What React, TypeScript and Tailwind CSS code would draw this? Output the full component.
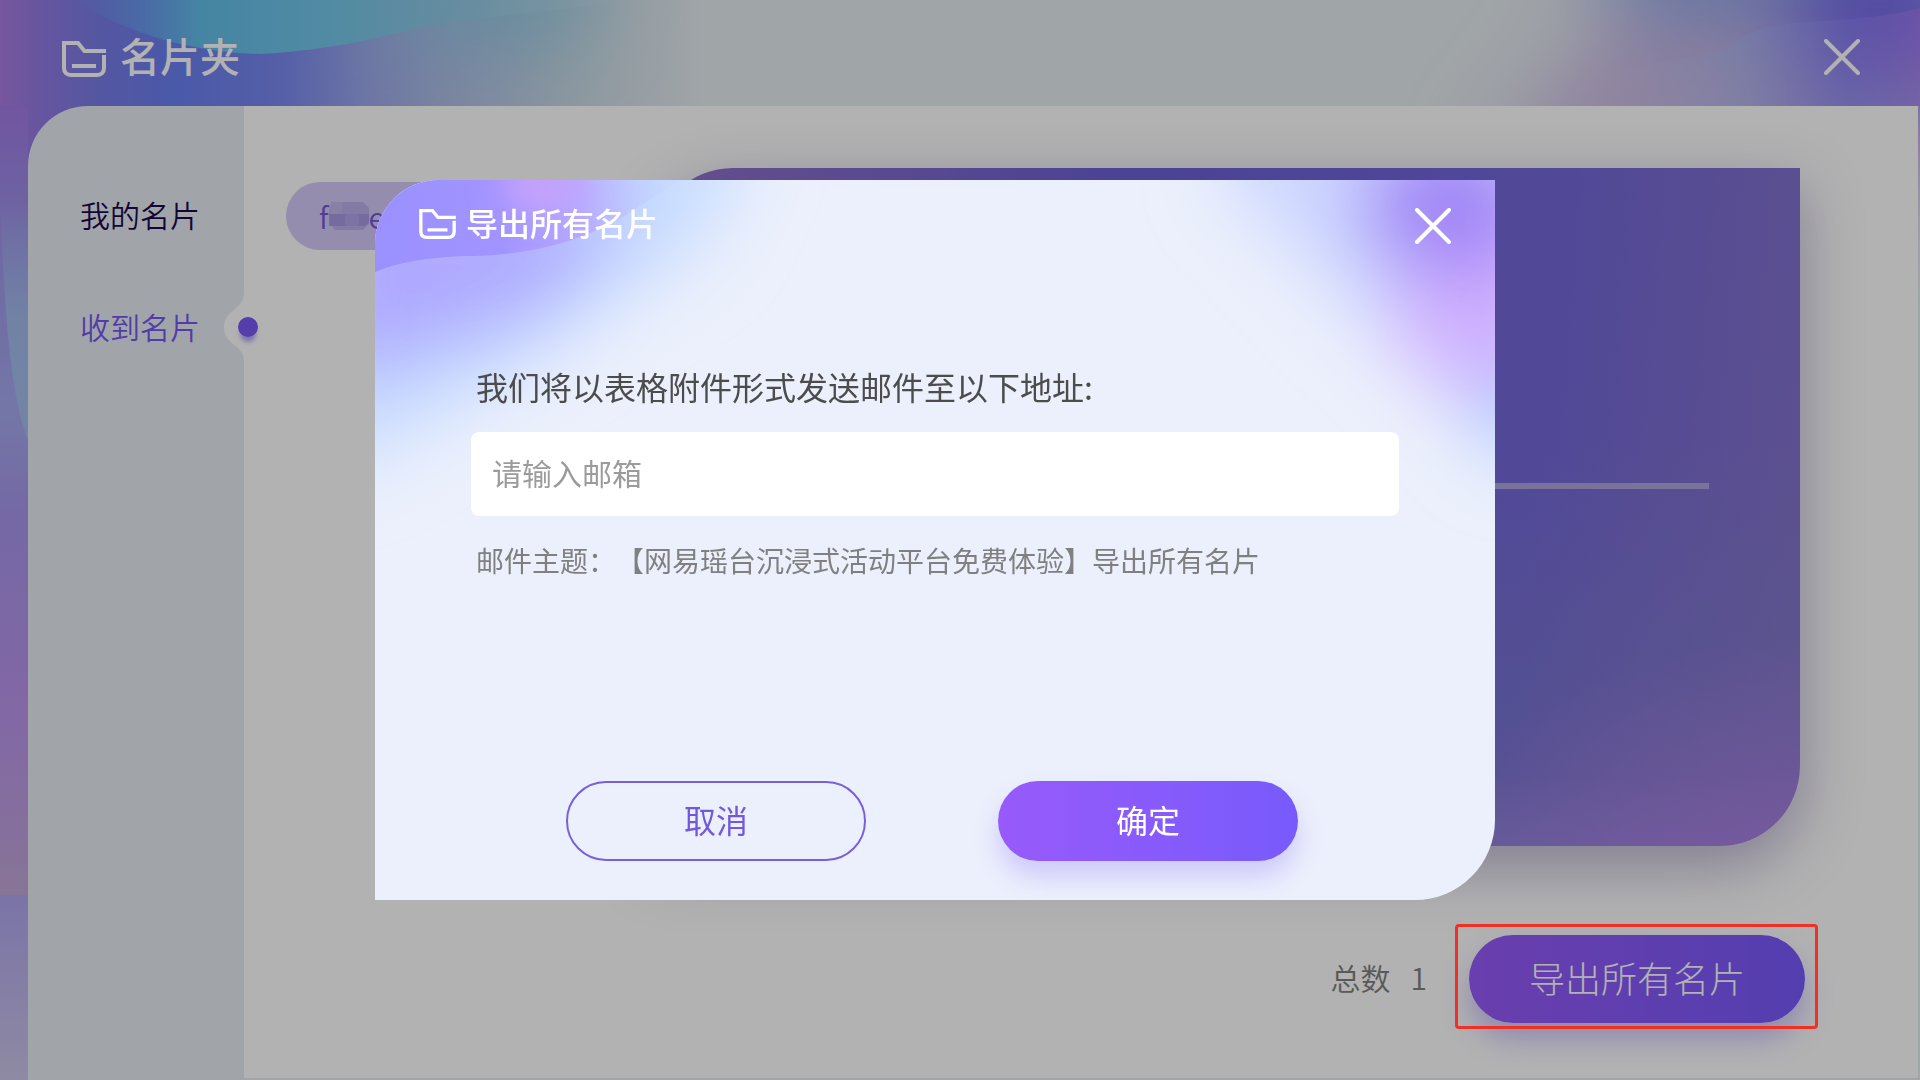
import React, { useState } from 'react';

const menu = [
  { id: 'mine', label: '我的名片' },
  { id: 'received', label: '收到名片' },
];

function FolderIcon({ className }: { className?: string }) {
  return (
    <svg viewBox="0 0 44 36" fill="none" stroke="currentColor" strokeWidth="4" className={className} aria-hidden="true">
      <path d="M44 10H22.5L16 2H2v25c0 4.4 2.6 7 7 7h26c4.4 0 7-2.6 7-7V14" />
      <path d="M10 25h24" />
    </svg>
  );
}

function CloseIcon({ className }: { className?: string }) {
  return (
    <svg viewBox="0 0 36 36" fill="none" stroke="currentColor" strokeWidth="4" strokeLinecap="round" className={className} aria-hidden="true">
      <path d="M2 2l32 32M34 2L2 34" />
    </svg>
  );
}

// Coloured light behind the whole page
function PageBackdrop() {
  return (
    <svg className="absolute inset-0 -z-10 h-full w-full" viewBox="0 0 1920 1080" preserveAspectRatio="none" aria-hidden="true">
      <defs>
        <filter id="pb-soft" x="-60%" y="-100%" width="220%" height="300%"><feGaussianBlur stdDeviation="18" /></filter>
        <filter id="pb-wide" x="-60%" y="-150%" width="220%" height="400%"><feGaussianBlur stdDeviation="44" /></filter>
        <linearGradient id="pb-side" gradientUnits="userSpaceOnUse" x1="0" y1="0" x2="0" y2="1080">
          <stop offset="0.1" stopColor="#a47ae6" />
          <stop offset="0.16" stopColor="#9d88e8" />
          <stop offset="0.24" stopColor="#a098ea" />
          <stop offset="0.38" stopColor="#a6aaf0" />
          <stop offset="0.48" stopColor="#a896ec" />
          <stop offset="0.64" stopColor="#ba94ee" />
          <stop offset="0.76" stopColor="#be9fe2" />
          <stop offset="0.828" stopColor="#c4a9d6" />
          <stop offset="0.829" stopColor="#b0a6f0" />
          <stop offset="1" stopColor="#cdc6ea" />
        </linearGradient>
        <linearGradient id="pb-top" gradientUnits="userSpaceOnUse" x1="0" y1="0" x2="700" y2="0">
          <stop offset="0" stopColor="#aa7ce2" />
          <stop offset="0.06" stopColor="#927ae4" />
          <stop offset="0.14" stopColor="#7a7ce8" />
          <stop offset="0.25" stopColor="#6a80f2" />
          <stop offset="0.4" stopColor="#7a88f0" />
          <stop offset="0.52" stopColor="#9ca8ec" />
          <stop offset="0.64" stopColor="#b2bee6" />
          <stop offset="0.8" stopColor="#c8d8e4" />
          <stop offset="1" stopColor="#e5ecf0" />
        </linearGradient>
        <linearGradient id="pb-teal" gradientUnits="userSpaceOnUse" x1="60" y1="0" x2="640" y2="0">
          <stop offset="0" stopColor="#6a90ee" stopOpacity="0" />
          <stop offset="0.24" stopColor="#62bfea" />
          <stop offset="0.5" stopColor="#78c8ea" />
          <stop offset="0.7" stopColor="#90cce6" stopOpacity="0.7" />
          <stop offset="1" stopColor="#dfeaee" stopOpacity="0" />
        </linearGradient>
        <linearGradient id="pb-fold" x1="0" y1="0" x2="1" y2="0">
          <stop offset="0" stopColor="#dfcfe6" stopOpacity="0" />
          <stop offset="0.5" stopColor="#aab6f0" />
          <stop offset="0.8" stopColor="#8a80f6" />
          <stop offset="1" stopColor="#a67af4" />
        </linearGradient>
        <linearGradient id="pb-wedge" x1="0" y1="0" x2="0" y2="1">
          <stop offset="0" stopColor="#a2cdee" stopOpacity="0" />
          <stop offset="0.5" stopColor="#a2cdee" />
          <stop offset="1" stopColor="#a2cdee" />
        </linearGradient>
      </defs>
      <rect width="1920" height="1080" fill="#e5ecf0" />
      <rect width="700" height="200" fill="url(#pb-top)" />
      <g filter="url(#pb-wide)">
        <path d="M1480 180L1640-20H2000V200z" fill="#cbb8e4" />
        <path d="M1560-80H2000V40L1780 20 1660 30z" fill="#8aa8ea" />
        <ellipse cx="1880" cy="10" rx="100" ry="90" fill="#7468ea" />
      </g>
      <path d="M0 106h28v974H0z" fill="url(#pb-side)" />
      <ellipse cx="490" cy="-10" rx="110" ry="60" fill="#86c8e4" opacity="0.8" filter="url(#pb-wide)" />
      <path d="M60-10H640V-4C580 10 500 14 420 27 380 38 330 50 260 54 170 52 100 20 60-10z" fill="url(#pb-teal)" />
      <path d="M1560 106c20-32 70-38 150-53 30-8 30-22 70-28 50-6 90-4 140-17v98z" fill="url(#pb-fold)" opacity="0.6" />
      <path d="M1810 60c10 40 50 36 110 30v16h-90z" fill="#7fa4ea" opacity="0.5" filter="url(#pb-soft)" />
      <path d="M0 200c4 90 8 190 28 240V200z" fill="url(#pb-wedge)" opacity="0.6" />
    </svg>
  );
}

function ModalBackdrop() {
  return (
    <svg className="absolute inset-0 -z-10 h-full w-full" viewBox="0 0 1120 720" preserveAspectRatio="none" aria-hidden="true">
      <defs>
        <filter id="mb-soft" x="-50%" y="-100%" width="200%" height="300%"><feGaussianBlur stdDeviation="16" /></filter>
        <filter id="mb-wide" x="-50%" y="-50%" width="200%" height="200%"><feGaussianBlur stdDeviation="38" /></filter>
        <linearGradient id="mb-ribbon" x1="0" y1="0" x2="1" y2="0">
          <stop offset="0" stopColor="#9a90ff" />
          <stop offset="0.4" stopColor="#a294ff" />
          <stop offset="0.65" stopColor="#b6a4ff" stopOpacity="0.8" />
          <stop offset="1" stopColor="#c0dcff" stopOpacity="0" />
        </linearGradient>
      </defs>
      <rect width="1120" height="720" fill="#ecf0fc" />
      <g filter="url(#mb-wide)">
        <path d="M-60-60H380L330 60 190 160 60 240-60 300z" fill="#c6dcff" />
        <path d="M-60 20H260L170 130-60 210z" fill="#aea8ff" />
        <path d="M850-80h330V290C1080 240 1000 150 850 0z" fill="#ccd6ff" />
        <ellipse cx="1110" cy="125" rx="90" ry="90" fill="#d0b0ff" />
        <ellipse cx="1075" cy="25" rx="90" ry="70" fill="#a084f6" />
        <ellipse cx="1135" cy="235" rx="34" ry="40" fill="#a8c8ff" />
      </g>
      <path d="M0-10H320L250 36C200 64 150 76 90 76 50 78 24 82 0 92z" fill="url(#mb-ribbon)" />
      <ellipse cx="165" cy="6" rx="40" ry="22" fill="#c8a2fc" filter="url(#mb-soft)" />
    </svg>
  );
}

function ExportModal({ onClose }: { onClose: () => void }) {
  const [email, setEmail] = useState('');

  return (
    <section
      role="dialog"
      aria-modal="true"
      aria-labelledby="export-title"
      className="relative isolate flex min-h-[720px] w-full max-w-[1120px] flex-col overflow-hidden rounded-tl-[64px] rounded-br-[80px]"
    >
      <ModalBackdrop />
      <header className="flex h-[88px] items-center px-11 text-white">
        <FolderIcon className="h-[30px] w-[37px]" />
        <h2 id="export-title" className="ml-2.5 pb-1 text-[32px] leading-10 font-medium">导出所有名片</h2>
        <button type="button" aria-label="关闭" onClick={onClose} className="mt-1 ml-auto">
          <CloseIcon className="size-9" />
        </button>
      </header>

      <div className="mt-[94px] px-24">
        <label htmlFor="email" className="block px-[5px] text-[32px] leading-12 text-[#4c4c4c]">
          我们将以表格附件形式发送邮件至以下地址:
        </label>
        <input
          id="email"
          type="email"
          value={email}
          onChange={(e) => setEmail(e.target.value)}
          placeholder="请输入邮箱"
          className="mt-[22px] h-[84px] w-full rounded-lg bg-white px-[21px] pb-1 text-[30px] text-[#4c4c4c] outline-none placeholder:text-[#9b9b9b]"
        />
        <p className="mt-6 px-[5px] text-[28px] leading-10 text-[#808080] [text-spacing-trim:space-all]">
          邮件主题：【网易瑶台沉浸式活动平台免费体验】导出所有名片
        </p>
      </div>

      <div className="mt-auto mb-[39px] flex justify-center gap-[132px] pr-1.5">
        <button type="button" onClick={onClose} className="h-20 w-[300px] rounded-full border-2 border-[#7a5fdc] pb-1 text-[32px] text-[#7458dc]">
          取消
        </button>
        <button type="submit" className="h-20 w-[300px] rounded-full bg-linear-to-r from-[#985afa] to-[#785afc] pb-1 text-[32px] text-white shadow-[0_16px_24px_rgba(120,90,250,0.25)]">
          确定
        </button>
      </div>
    </section>
  );
}

export default function App() {
  const [active, setActive] = useState('received');
  const [open, setOpen] = useState(true);

  return (
    <div className="relative isolate flex min-h-screen flex-col overflow-hidden font-['Noto_Sans_CJK_SC',sans-serif]">
      <PageBackdrop />

      <header className="flex h-[106px] items-center pt-2 pr-[60px] pl-[62px] text-white">
        <FolderIcon className="mt-1 h-9 w-11" />
        <h1 className="ml-3.5 pb-1 text-[40px] leading-12 font-medium">名片夹</h1>
        <button type="button" aria-label="关闭" className="ml-auto">
          <CloseIcon className="size-9" />
        </button>
      </header>

      <div className="mr-0.5 ml-7 flex flex-1">
        <nav className="w-[216px] shrink-0 rounded-tl-[60px] bg-[#e7edf4] pt-[54px]">
          {menu.map((item) => (
            <div key={item.id} className="relative flex h-28 items-center pl-[52px]">
              <button
                type="button"
                onClick={() => setActive(item.id)}
                className={item.id === active ? 'pb-1 text-[30px] font-[350] text-[#7458f0]' : 'pb-1 text-[30px] font-[350] text-[#1c0a4e]'}
              >
                {item.label}
              </button>
              {item.id === active && (
                <svg className="absolute top-[21px] -right-4 h-[76px] w-9" viewBox="0 0 36 76" aria-hidden="true">
                  <defs>
                    <filter id="dot-shadow" x="-50%" y="-50%" width="200%" height="200%"><feGaussianBlur stdDeviation="2" /></filter>
                  </defs>
                  <path d="M20 0c0 9-6 13-11 18C3 22 0 27 0 34s3 12 9 17c5 4 11 8 11 17z" fill="#fff" />
                  <circle cx="24" cy="41" r="8" fill="#7458f0" opacity="0.5" filter="url(#dot-shadow)" />
                  <circle cx="24" cy="34" r="10" fill="#7a58f4" />
                </svg>
              )}
            </div>
          ))}
        </nav>

        <main className="mb-0.5 flex flex-1 flex-col bg-white pt-[62px] pr-[118px] pb-[55px] pl-[42px]">
          <div className="flex flex-1 gap-[47px]">
            <ul className="mt-3.5 w-80 shrink-0">
              <li className="flex h-[68px] items-center rounded-full bg-[#d5cbfa] pl-[33px] text-[30px] font-[350] text-[#7458dc]">
                f
                <svg className="h-7 w-10" viewBox="0 0 40 28" aria-hidden="true">
                  <path d="M4 0h30l6 6v16l-6 6H6l-6-8V8z" fill="#bcb0ea" />
                  <path d="M2 0h11v12H2z" fill="#c4b8ee" />
                  <path d="M0 12h16v12H0zM30 12h10v8l-4 4h-6z" fill="#a89ae4" />
                  <path d="M16 12h14v12H16z" fill="#b2a4ea" />
                </svg>
                el
              </li>
            </ul>
            <article className="flex flex-1 flex-col justify-center rounded-tl-[80px] rounded-br-[80px] bg-[radial-gradient(ellipse_at_100%_105%,#ac7ee4_0%,transparent_24%),linear-gradient(to_top,rgba(160,140,230,0.5)_0%,transparent_10%),linear-gradient(to_top,rgba(130,136,200,0.5)_0%,transparent_60%),linear-gradient(95deg,#9272c8_0%,#6c60d6_40%,#7468da_75%,#8674cc_100%)] px-[91px] shadow-[0_20px_60px_rgba(60,40,120,0.35)]">
              <hr className="mb-[42px] border-t-[6px] border-[#aea4df]" />
            </article>
          </div>

          <footer className="mt-[89px] -mr-[5px] flex items-center justify-end">
            <p className="mr-[42px] pb-1 text-[30px] font-[350] text-[#808080]">
              总数<span className="ml-5">1</span>
            </p>
            <div className="relative">
              <button type="button" onClick={() => setOpen(true)} className="h-[88px] w-[336px] rounded-full bg-linear-to-r from-[#985afa] to-[#785afc] pb-1 text-[36px] font-light text-white shadow-[0_16px_28px_rgba(120,90,250,0.35)]">
                导出所有名片
              </button>
              <div className="pointer-events-none absolute -top-[11px] -right-[13px] -bottom-[6px] -left-[14px] z-20 rounded-sm border-3 border-[#ee3124]" />
            </div>
          </footer>
        </main>
      </div>

      {open && (
        <div className="fixed inset-0 z-10 flex items-center justify-center bg-black/30 pr-[50px]">
          <ExportModal onClose={() => setOpen(false)} />
        </div>
      )}
    </div>
  );
}
